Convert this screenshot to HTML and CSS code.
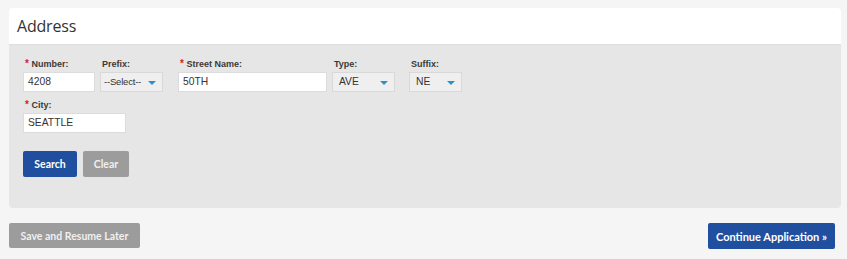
FILE: index.html
```html
<!DOCTYPE html>
<html>
<head>
<meta charset="utf-8">
<link rel="stylesheet" href="styles.css">
</head>
<body>
<div class="page">
  <section class="panel">
    <header class="panel-head"><h1>Address</h1></header>
    <div class="panel-body">
      <div class="row">
        <div class="field f-number"><label><span class="req">*</span> Number:</label><div class="input">4208</div></div>
        <div class="field f-prefix"><label>Prefix:</label><div class="select">--Select--<span class="caret"></span></div></div>
        <div class="field f-street"><label><span class="req">*</span> Street Name:</label><div class="input">50TH</div></div>
        <div class="field f-type"><label>Type:</label><div class="select">AVE<span class="caret"></span></div></div>
        <div class="field f-suffix"><label>Suffix:</label><div class="select">NE<span class="caret"></span></div></div>
      </div>
      <div class="row row-city">
        <div class="field f-city"><label><span class="req">*</span> City:</label><div class="input">SEATTLE</div></div>
      </div>
      <div class="actions">
        <button class="btn btn-blue btn-search">Search</button>
        <button class="btn btn-gray btn-clear">Clear</button>
      </div>
    </div>
  </section>
  <div class="footer">
    <button class="btn btn-gray btn-save">Save and Resume Later</button>
    <button class="btn btn-blue btn-continue">Continue Application »</button>
  </div>
</div>
</body>
</html>
```
FILE: styles.css
```css
html, body { margin: 0; padding: 0; }
body {
  background: #f5f5f5;
  width: 847px;
  height: 259px;
  overflow: hidden;
  font-family: "Open Sans", "Liberation Sans", sans-serif;
}
.page { padding: 8px 6px 0 9px; }
.panel { width: 832px; border-radius: 4px; overflow: hidden; }
.panel-head {
  background: #ffffff;
  height: 37px;
  border-bottom: 1px solid #dedede;
  box-sizing: border-box;
  display: flex;
  align-items: center;
  padding-left: 8px;
}
.panel-head h1 {
  margin: 0;
  font-family: "Open Sans", "Liberation Sans", sans-serif;
  font-weight: 400;
  font-size: 16px;
  color: #333;
  letter-spacing: -0.2px;
}
.panel-body {
  background: #e6e6e6;
  height: 163px;
  box-sizing: border-box;
  padding: 14px 0 0 14px;
}
.row { display: flex; }
.row-city { margin-top: 8px; }
.field { display: flex; flex-direction: column; }
.field label {
  display: block;
  height: 11px;
  font-family: "Liberation Sans", Arial, sans-serif;
  font-weight: 700;
  font-size: 9px;
  line-height: 11px;
  color: #3a3a3a;
  margin-bottom: 2px;
  padding-left: 2px;
  white-space: nowrap;
  overflow: visible;
}
.req { color: #d2232a; font-size: 10px; line-height: 0; }
.input, .select {
  height: 20px;
  box-sizing: border-box;
  font-family: "Liberation Sans", Arial, sans-serif;
  font-size: 10.3px;
  line-height: 18px;
  color: #333;
  padding-left: 4px;
  border: 1px solid #dcdcdc;
  white-space: nowrap;
}
.input { background: #ffffff; }
.select {
  background: #efefef;
  position: relative;
  border-color: #d9d9d9;
}
.caret {
  position: absolute;
  right: 6px;
  top: 8px;
  width: 0; height: 0;
  border-left: 4px solid transparent;
  border-right: 4px solid transparent;
  border-top: 4px solid #2d8fd0;
}
.f-number { width: 72px; margin-right: 5px; }
.f-prefix { width: 63px; margin-right: 15px; }
.f-street { width: 149px; margin-right: 5px; }
.f-type { width: 63px; margin-right: 14px; }
.f-suffix { width: 53px; }
.f-city { width: 103px; }
.f-prefix .select { padding-left: 3px; font-size: 9.5px; letter-spacing: -0.2px; }
.f-type .select, .f-suffix .select { padding-left: 6px; }
.actions { display: flex; gap: 6px; margin-top: 18px; }
.btn {
  border: none;
  border-radius: 2px;
  font-family: "Lato", "Liberation Sans", sans-serif;
  font-weight: 700;
  font-size: 10.5px;
  color: #ffffff;
  height: 26px;
  padding: 0;
  cursor: pointer;
}
.btn-blue { background: #1f4f9e; }
.btn-gray { background: #9c9c9c; color: #f0f0f0; }
.btn-search { width: 54px; }
.btn-clear { width: 46px; }
.footer {
  display: flex;
  justify-content: space-between;
  margin-top: 15px;
  width: 826px;
}
.btn-save { width: 131px; height: 25px; }
.btn-continue { width: 127px; font-size: 11px; }
```
